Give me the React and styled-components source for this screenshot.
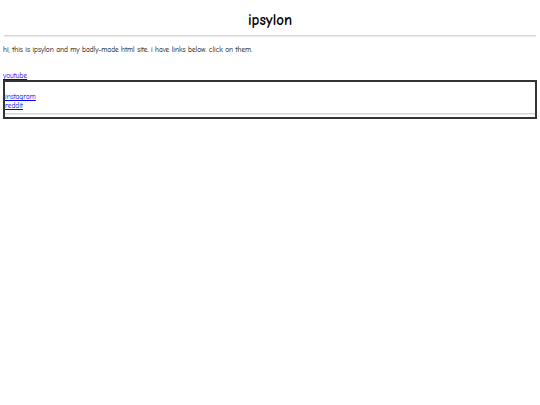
import React from "react";
import styled, { createGlobalStyle } from "styled-components";

const Global = createGlobalStyle`
  html, body { margin: 0; padding: 0; background: #fff; }
  body {
    padding: 0 3px;
    font-family: "Comic Sans MS", "Comic Neue", "DejaVu Sans", sans-serif;
    font-size: 7.3px;
    color: #000;
  }
`;

const Title = styled.h1`
  margin: 0;
  padding-top: 10px;
  text-align: center;
  font-size: 15px;
  line-height: 20px;
  font-weight: bold;
`;

const Rule = styled.hr`
  margin: ${(p) => p.$margin || "5px 1px 0"};
  border: none;
  border-top: 1px solid #d6d6d6;
  border-bottom: 1px solid #ececec;
  height: 0;
`;

const Intro = styled.p`
  margin: 8px 0 0;
  line-height: 9px;
  font-weight: 500;
`;

const Link = styled.a`
  display: block;
  color: #0000ee;
  text-decoration: underline;
  line-height: 9px;
`;

const TopLink = styled(Link)`
  margin-top: 17px;
`;

const Box = styled.div`
  border: 2px solid #333;
  padding: 10px 0 2px;
`;

export default function App() {
  return (
    <>
      <Global />
      <Title>ipsylon</Title>
      <Rule />
      <Intro>hi, this is ipsylon and my badly-made html site. i have links below. click on them.</Intro>
      <TopLink href="#">youtube</TopLink>
      <Box>
        <Link href="#">instagram</Link>
        <Link href="#">reddit</Link>
        <Rule $margin="3px 0 0" />
      </Box>
    </>
  );
}
